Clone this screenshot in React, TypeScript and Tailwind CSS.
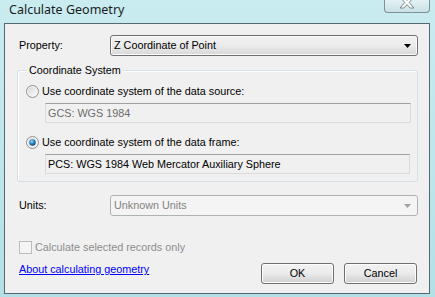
import React from 'react';

const ui = { fontFamily: '"Liberation Sans", Arial, sans-serif', fontSize: '10.8px' };

function Radio({ checked = false }: { checked?: boolean }) {
  return (
    <svg width="13" height="13" viewBox="0 0 13 13" className="shrink-0">
      <defs>
        <linearGradient id={checked ? 'rOn' : 'rOff'} x1="0" y1="0" x2="1" y2="1">
          <stop offset="0" stopColor="#d6d6d6" />
          <stop offset="1" stopColor="#fdfdfd" />
        </linearGradient>
        <radialGradient id="dot" cx="0.4" cy="0.35" r="0.7">
          <stop offset="0" stopColor="#9fe3ff" />
          <stop offset="0.45" stopColor="#2d8ec7" />
          <stop offset="1" stopColor="#0f3f6c" />
        </radialGradient>
      </defs>
      <circle cx="6.5" cy="6.5" r="6" fill="#f4f4f4" stroke="#8e8f8f" strokeWidth="1" />
      <circle cx="6.5" cy="6.5" r="4.5" fill={`url(#${checked ? 'rOn' : 'rOff'})`} />
      {checked && <circle cx="6.5" cy="6.5" r="3.2" fill="url(#dot)" />}
    </svg>
  );
}

function ArrowDown({ color }: { color: string }) {
  return (
    <svg width="7" height="4" viewBox="0 0 7 4">
      <path d="M0 0h7L3.5 4z" fill={color} />
    </svg>
  );
}

function Button({ label }: { label: string }) {
  return (
    <button
      className="w-[73px] h-[21px] rounded-[3px] border border-[#707070] bg-gradient-to-b from-[#f2f2f2] via-[#ebebeb] to-[#cfcfcf] shadow-[inset_0_0_0_1px_#fcfcfc] text-[#000] flex items-center justify-center"
      style={ui}
    >
      {label}
    </button>
  );
}

export default function App() {
  return (
    <div className="w-[435px] h-[297px] overflow-hidden bg-gradient-to-b from-[#c9ecf1] via-[#bfe6ec] to-[#b3e0e7] flex flex-col">
      {/* title bar */}
      <div className="h-[23px] flex items-start shrink-0">
        <span
          className="ml-[9px] mt-[2px] text-[#1b1b1b] text-[12.5px] leading-[16px]"
          style={{ fontFamily: '"Noto Sans", "Open Sans", sans-serif' }}
        >
          Calculate Geometry
        </span>
        <div className="ml-auto mr-[5px] w-[46px] h-[14px] -mt-[1px] rounded-b-[4px] border border-t-0 border-[#7d9298] bg-gradient-to-b from-[#e6f3f5] to-[#c9e1e6] flex items-start justify-center">
          <svg width="18" height="12" viewBox="0 0 18 12" className="-mt-[2px]">
            <path
              d="M2 0h3.8L9 3.4 12.2 0H16l-4.8 5.5L16 11h-3.8L9 7.6 5.8 11H2l4.8-5.5z"
              fill="#ffffff"
              stroke="#6b7a80"
              strokeWidth="0.9"
              strokeLinejoin="round"
            />
          </svg>
        </div>
      </div>

      {/* client area */}
      <div className="ml-[4px] w-[426px] h-[271px] border border-[#56686e] bg-[#f0f0f0] flex flex-col" style={ui}>
        {/* property */}
        <div className="mt-[11px] h-[21px] flex items-center">
          <span className="pl-[14px] w-[105px] text-[#000]">Property:</span>
          <div className="w-[308px] h-[21px] rounded-[3px] border border-[#707070] bg-gradient-to-b from-[#f2f2f2] via-[#ebebeb] to-[#d8d8d8] shadow-[inset_0_0_0_1px_#fbfbfb] flex items-center pl-[3px] pr-[6px]">
            <span className="flex-1 text-[#000]">Z Coordinate of Point</span>
            <ArrowDown color="#000" />
          </div>
        </div>

        {/* coordinate system group */}
        <div className="relative mt-[14px] ml-[12px] w-[401px] h-[112px] border border-[#d5dfe5] rounded-[3px] shadow-[inset_1px_1px_0_#ffffff] flex flex-col">
          <span className="absolute -top-[7px] left-[8px] px-[3px] bg-[#f0f0f0] leading-[13px] text-[#000]">
            Coordinate System
          </span>
          <div className="mt-[14px] ml-[8px] flex items-center gap-[3px] h-[13px]">
            <Radio />
            <span className="text-[#000]">Use coordinate system of the data source:</span>
          </div>
          <div className="mt-[5px] ml-[27px] w-[366px] h-[20px] border border-[#dadada] border-t-[#a0a0a0] bg-[#f0f0f0] flex items-center pl-[2px] text-[#6d6d6d]">
            GCS: WGS 1984
          </div>
          <div className="mt-[13px] ml-[8px] flex items-center gap-[3px] h-[13px]">
            <Radio checked />
            <span className="text-[#000]">Use coordinate system of the data frame:</span>
          </div>
          <div className="mt-[5px] ml-[27px] w-[365px] h-[20px] border border-[#dadada] border-t-[#a0a0a0] bg-[#f0f0f0] flex items-center pl-[2px] text-[#000]">
            PCS: WGS 1984 Web Mercator Auxiliary Sphere
          </div>
        </div>

        {/* units */}
        <div className="mt-[13px] h-[21px] flex items-center">
          <span className="pl-[14px] w-[105px] text-[#000]">Units:</span>
          <div className="w-[308px] h-[21px] rounded-[3px] border border-[#adb2b5] bg-[#f4f4f4] flex items-center pl-[3px] pr-[6px]">
            <span className="flex-1 text-[#838383]">Unknown Units</span>
            <ArrowDown color="#a0a0a0" />
          </div>
        </div>

        {/* checkbox */}
        <div className="mt-[25px] ml-[14px] h-[13px] flex items-center gap-[3px]">
          <div className="w-[13px] h-[13px] border border-[#bcbcbc] bg-[#f4f4f4]" />
          <span className="text-[#8d8d8d]">Calculate selected records only</span>
        </div>

        {/* bottom row */}
        <div className="mt-[9px] flex items-start">
          <a href="#" className="ml-[14px] leading-[13px] text-[#0000ff] underline">
            About calculating geometry
          </a>
          <div className="ml-auto mr-[12px] flex gap-[10px]">
            <Button label="OK" />
            <Button label="Cancel" />
          </div>
        </div>
      </div>
    </div>
  );
}
